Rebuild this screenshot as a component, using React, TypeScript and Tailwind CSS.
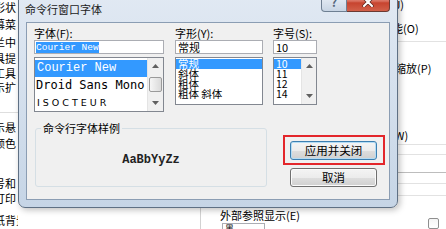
import * as React from "react";

const cjk = "font-['SimSun','Noto_Sans_CJK_SC',sans-serif]";
const mono = "font-['Liberation_Mono','Courier_New',monospace]";

function UpArrow() {
  return (
    <svg width="7" height="4" viewBox="0 0 7 4">
      <path d="M0 4 L3.5 0 L7 4 Z" fill="#606060" />
    </svg>
  );
}

function DownArrow() {
  return (
    <svg width="7" height="4" viewBox="0 0 7 4">
      <path d="M0 0 L3.5 4 L7 0 Z" fill="#606060" />
    </svg>
  );
}

function ScrollBar({ width, thumb }: { width: string; thumb?: boolean }) {
  return (
    <div className={`${width} shrink-0 flex flex-col bg-[#f0f0f0] border-l border-[#e4e4e4]`}>
      <div className="h-[16px] flex items-center justify-center">
        <UpArrow />
      </div>
      <div className="flex-1 px-[1px]">
        {thumb ? (
          <div className="mt-[3px] h-[15px] rounded-[2px] border border-[#9a9a9a] bg-linear-to-r from-[#f6f6f6] to-[#dadada]" />
        ) : null}
      </div>
      <div className="h-[16px] flex items-center justify-center">
        <DownArrow />
      </div>
    </div>
  );
}

function Field({ children }: { children: React.ReactNode }) {
  return (
    <div className="h-[14px] border border-[#abadb3] bg-white flex items-center px-[1px] overflow-hidden whitespace-nowrap">
      {children}
    </div>
  );
}

function SmallRow({ text, selected }: { text: string; selected?: boolean }) {
  return (
    <div
      className={`h-[10px] leading-[10px] text-[10.5px] pl-[2px] whitespace-nowrap ${
        selected ? "bg-[#3399ff] text-white" : ""
      }`}
    >
      {text}
    </div>
  );
}

function Win7Button({ label, isDefault }: { label: string; isDefault?: boolean }) {
  return (
    <div
      className={`w-[87px] h-[19px] rounded-[3px] border flex items-center justify-center text-[11.5px] leading-[17px] bg-[linear-gradient(to_bottom,#f4f4f4_0%,#ececec_50%,#dedede_51%,#d0d0d0_100%)] ${
        isDefault
          ? "border-[#3c7fb1] shadow-[inset_0_0_0_1px_#b4dcf4]"
          : "border-[#707070] shadow-[inset_0_0_0_1px_#fbfbfb]"
      }`}
    >
      {label}
    </div>
  );
}

function LeftColumn() {
  return (
    <div className="w-[18px] shrink-0 overflow-hidden">
      <div className="-ml-[6px] flex flex-col leading-[12px] whitespace-nowrap">
        <div className="mt-[1px]">彩状</div>
        <div className="mt-[5px]">幕菜</div>
        <div className="mt-[6px]">兰中</div>
        <div className="mt-[4px]">具提</div>
        <div className="mt-[3px]">工具</div>
        <div className="mt-[2px]">示扩</div>
        <div className="mt-[19px] h-px bg-[#dedede]" />
        <div className="mt-[8px]">示悬</div>
        <div className="mt-[4px]">颜色</div>
        <div className="mt-[28px]">号和</div>
        <div className="mt-[3px]">打印</div>
        <div className="mt-[10px]">纸背景(K)</div>
      </div>
    </div>
  );
}

function RightColumn() {
  return (
    <div className="w-[56px] shrink-0 flex flex-col leading-[12px] whitespace-nowrap">
      <div className="h-[21px] pl-[1px]">
        <div className="-mt-[2px]">(J)</div>
      </div>
      <div className="h-[21px] pl-[2px] pt-[1px]">能(O)</div>
      <div className="h-px bg-[#e2e2e2]" />
      <div className="h-[88px] pl-[5px] pt-[20px]">缩放(P)</div>
      <div className="h-[16px] pl-[1px]">(W)</div>
      <div className="h-px bg-[#e2e2e2]" />
      <div className="h-[9px]" />
      <div className="h-px bg-[#e2e2e2]" />
      <div className="h-[17px]" />
      <div className="h-px bg-[#bdbdbd]" />
      <div className="h-[11px]" />
      <div className="h-px bg-[#e2e2e2]" />
      <div className="h-[11px]" />
      <div className="h-px bg-[#e2e2e2]" />
      <div className="pl-[38px] pt-[22px]">
        <div className="w-[11px] h-[11px] rounded-[2px] border border-[#8f8f8f] bg-linear-to-b from-[#f4f4f4] to-[#ffffff]" />
      </div>
    </div>
  );
}

function FontDialog() {
  return (
    <div className="absolute left-[18px] top-[-8px] z-10 w-[380px] h-[216px] rounded-[7px] border border-[#5f7084] bg-linear-to-b from-[#e1e9f3] to-[#c6d5e6] shadow-[2px_2px_6px_rgba(0,0,0,0.25)] flex flex-col">
      <div className="h-[29px] shrink-0 flex items-start">
        <div className="pl-[6px] pt-[10px] leading-[12px] text-[11px] text-[#1a1a1a] whitespace-nowrap">
          命令行窗口字体
        </div>
        <div className="ml-auto mr-[7px] flex">
          <div className="w-[26px] h-[19px] border border-t-0 border-[#6e7f92] rounded-bl-[4px] bg-linear-to-b from-[#eef3f9] to-[#c8d5e4] flex items-center justify-center text-[12px] font-bold text-[#55677c] leading-[12px]">
            ?
          </div>
          <div className="w-[43px] h-[19px] border border-t-0 border-l-0 border-[#6b3a33] rounded-br-[4px] bg-[linear-gradient(to_bottom,#eab0a3_0%,#d9705f_45%,#c7442f_55%,#d2604a_100%)] flex items-center justify-center">
            <svg width="12" height="10" viewBox="0 0 12 10">
              <path d="M2 1 L10 9 M10 1 L2 9" stroke="#5a2a24" strokeWidth="3.4" strokeLinecap="round" />
              <path d="M2 1 L10 9 M10 1 L2 9" stroke="#ffffff" strokeWidth="2" strokeLinecap="round" />
            </svg>
          </div>
        </div>
      </div>

      <div className="flex-1 mx-[7px] mb-[7px] border border-[#8b9db3] bg-[#f0f0f0] flex flex-col pl-[7px] pt-[4px] text-[11px]">
        <div className="flex items-start">
          <div className="w-[130px] flex flex-col">
            <div className="h-[13px] leading-[13px] whitespace-nowrap">字体(F):</div>
            <Field>
              <span className={`${mono} bg-[#3399ff] text-white text-[9.5px] leading-[11px]`}>
                Courier New
              </span>
            </Field>
            <div className="mt-[3px] h-[55px] border border-[#828790] bg-white flex overflow-hidden">
              <div className="flex-1 min-w-0 flex flex-col pt-[2px] overflow-hidden">
                <div className={`${mono} h-[17px] leading-[17px] text-[12px] pl-[2px] bg-[#3399ff] text-white whitespace-nowrap`}>
                  Courier New
                </div>
                <div className="font-['DejaVu_Sans_Mono',monospace] h-[17px] leading-[17px] text-[12px] pl-[1px] whitespace-nowrap">
                  Droid Sans Mono
                </div>
                <div className="font-['DejaVu_Sans',sans-serif] h-[17px] leading-[17px] text-[9.5px] tracking-[3px] pl-[2px] whitespace-nowrap">
                  ISOCTEUR
                </div>
              </div>
              <ScrollBar width="w-[16px]" thumb />
            </div>
          </div>

          <div className="ml-[11px] w-[88px] flex flex-col">
            <div className="h-[13px] leading-[13px] whitespace-nowrap">字形(Y):</div>
            <Field>
              <span className="pl-[1px] leading-[12px]">常规</span>
            </Field>
            <div className="mt-[3px] h-[48px] border border-[#828790] bg-white flex flex-col pt-[1px] overflow-hidden">
              <SmallRow text="常规" selected />
              <SmallRow text="斜体" />
              <SmallRow text="粗体" />
              <SmallRow text="粗体 斜体" />
            </div>
          </div>

          <div className="ml-[10px] w-[44px] flex flex-col">
            <div className="h-[13px] leading-[13px] whitespace-nowrap">字号(S):</div>
            <Field>
              <span className="pl-[1px] leading-[12px]">10</span>
            </Field>
            <div className="mt-[3px] h-[48px] border border-[#828790] bg-white flex overflow-hidden">
              <div className="flex-1 min-w-0 flex flex-col pt-[1px]">
                <SmallRow text="10" selected />
                <SmallRow text="11" />
                <SmallRow text="12" />
                <SmallRow text="14" />
              </div>
              <ScrollBar width="w-[15px]" />
            </div>
          </div>
        </div>

        <div className="flex items-start">
          <fieldset className="ml-[1px] mt-[10px] w-[232px] h-[65px] border border-[#d5dfe5] rounded-[3px]">
            <legend className="ml-[5px] px-[2px] leading-[13px] whitespace-nowrap">命令行字体样例</legend>
            <div className={`${mono} h-[50px] flex items-center justify-center text-[12px] font-bold text-[#222]`}>
              AaBbYyZz
            </div>
          </fieldset>

          <div className="ml-[16px] mt-[23px] flex flex-col">
            <div className="w-[102px] h-[30px] border-2 border-[#e3262b] pl-[5px] pt-[4px]">
              <Win7Button label="应用并关闭" isDefault />
            </div>
            <div className="mt-[3px] ml-[7px]">
              <Win7Button label="取消" />
            </div>
          </div>
        </div>
      </div>
    </div>
  );
}

export default function App() {
  return (
    <div className={`relative w-[446px] h-[229px] overflow-hidden bg-white text-black text-[11px] ${cjk}`}>
      <div className="flex h-full">
        <LeftColumn />
        <div className="flex-1 flex flex-col">
          <div className="flex-1" />
          <div className="h-[21px] flex">
            <div className="w-[182px] shrink-0" />
            <div className="w-px bg-[#d2d2d2]" />
            <div className="pl-[19px] flex flex-col">
              <div className="mt-[1px] leading-[12px] whitespace-nowrap">外部参照显示(E)</div>
              <div className="mt-[2px] ml-[2px] w-[43px] h-[12px] border border-[#abadb3] bg-white pl-[2px] text-[9px] leading-[10px]">
                黑
              </div>
            </div>
          </div>
        </div>
        <RightColumn />
      </div>
      <FontDialog />
    </div>
  );
}
